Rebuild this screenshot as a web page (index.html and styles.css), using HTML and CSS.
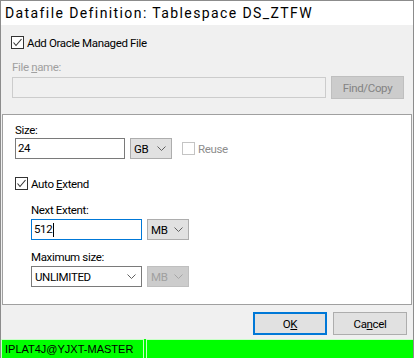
FILE: index.html
```html
<!DOCTYPE html>
<html lang="en">
<head>
  <meta charset="UTF-8">
  <meta name="viewport" content="width=device-width, initial-scale=1.0">
  <title>Datafile Definition</title>
  <link rel="stylesheet" href="styles.css">
</head>
<body>
  <div class="window">
    <div class="titlebar">Datafile Definition: Tablespace DS_ZTFW</div>

    <div class="top">
      <label class="check">
        <span class="box"><svg width="11" height="11" viewBox="0 0 11 11"><polyline points="1.5,5.5 4,8.5 9.5,2" fill="none" stroke="#333" stroke-width="1.1"/></svg></span>
        <span>Add Oracle Managed File</span>
      </label>
      <div class="label disabled">File <u>n</u>ame:</div>
      <div class="file-row">
        <div class="field field-disabled file-field"></div>
        <div class="btn btn-disabled">Find/Copy</div>
      </div>
    </div>

    <div class="panel">
      <div class="label">Size:</div>
      <div class="row">
        <div class="field size-field">24</div>
        <div class="combo unit">GB <svg class="chev" width="9" height="5" viewBox="0 0 9 5"><polyline points="0.5,0.5 4.5,4.5 8.5,0.5" fill="none" stroke="#606060"/></svg></div>
        <label class="check check-disabled reuse">
          <span class="box"></span>
          <span>Reuse</span>
        </label>
      </div>

      <label class="check auto">
        <span class="box"><svg width="11" height="11" viewBox="0 0 11 11"><polyline points="1.5,5.5 4,8.5 9.5,2" fill="none" stroke="#333" stroke-width="1.1"/></svg></span>
        <span>Auto <u>E</u>xtend</span>
      </label>

      <div class="extend">
        <div class="label next-label">Next Extent:</div>
        <div class="row">
          <div class="field field-focus ext-field">512<span class="caret"></span></div>
          <div class="combo unit">MB <svg class="chev" width="9" height="5" viewBox="0 0 9 5"><polyline points="0.5,0.5 4.5,4.5 8.5,0.5" fill="none" stroke="#606060"/></svg></div>
        </div>
        <div class="label max-label">Maximum size:</div>
        <div class="row">
          <div class="combo combo-white ext-field">UNLIMITED <svg class="chev" width="9" height="5" viewBox="0 0 9 5"><polyline points="0.5,0.5 4.5,4.5 8.5,0.5" fill="none" stroke="#606060"/></svg></div>
          <div class="combo combo-disabled unit">MB <svg class="chev" width="9" height="5" viewBox="0 0 9 5"><polyline points="0.5,0.5 4.5,4.5 8.5,0.5" fill="none" stroke="#a6a6a6"/></svg></div>
        </div>
      </div>
    </div>

    <div class="buttons">
      <div class="btn btn-default">O<u>K</u></div>
      <div class="btn">Ca<u>n</u>cel</div>
    </div>

    <div class="statusbar">
      <div class="cell cell-user">IPLAT4J@YJXT-MASTER</div>
      <div class="cell cell-rest"></div>
    </div>
  </div>
</body>
</html>
```

FILE: styles.css
```css
body {
  margin: 0;
  padding: 0;
  background-color: #f0f0f0;
}
.window {
  width: 414px;
  height: 358px;
  box-sizing: border-box;
  border: 1px solid #8c8c8c;
  border-bottom: none;
  background-color: #f0f0f0;
  font-family: Roboto, "Liberation Sans", sans-serif;
  font-size: 11.5px;
  letter-spacing: -0.35px;
  color: #000;
  overflow: hidden;
}
.titlebar {
  height: 24px;
  line-height: 24px;
  padding-left: 4px;
  background-color: #fff;
  font-size: 14px;
  letter-spacing: 1.4px;
}
u {
  text-decoration: underline;
  text-underline-offset: 1px;
}
.top {
  padding: 11px 0 0 10px;
}
.check {
  display: flex;
  align-items: center;
  gap: 3px;
  height: 13px;
}
.box {
  width: 13px;
  height: 13px;
  box-sizing: border-box;
  border: 1px solid #333;
  background-color: #fff;
  display: flex;
}
.check-disabled {
  color: #8d8d8d;
}
.check-disabled .box {
  border-color: #c4c4c4;
}
.label {
  height: 15px;
  line-height: 15px;
}
.disabled {
  color: #a0a0a0;
}
.top .label {
  margin-top: 11px;
  padding-left: 1px;
}
.file-row {
  display: flex;
  align-items: center;
  gap: 5px;
  margin-top: 1px;
  padding-left: 1px;
}
.field {
  height: 21px;
  box-sizing: border-box;
  border: 1px solid #7a7a7a;
  background-color: #fff;
  line-height: 19px;
  padding-left: 2px;
  display: flex;
  align-items: center;
}
.field-disabled {
  border-color: #cccccc;
  background-color: #f0f0f0;
}
.field-focus {
  border-color: #0078d7;
}
.file-field {
  width: 314px;
}
.caret {
  display: inline-block;
  width: 1px;
  height: 14px;
  background-color: #000;
  margin-left: 1px;
}
.btn {
  width: 74px;
  height: 23px;
  box-sizing: border-box;
  border: 1px solid #adadad;
  background-color: #e1e1e1;
  display: flex;
  align-items: center;
  justify-content: center;
}
.btn-disabled {
  width: 73px;
  background-color: #cccccc;
  border-color: #bfbfbf;
  color: #838383;
}
.btn-default {
  border: 2px solid #0078d7;
}
.panel {
  margin: 15px 1px 0;
  height: 191px;
  box-sizing: border-box;
  border: 1px solid #a0a0a0;
  background-color: #fff;
  padding: 8px 0 0 12px;
}
.row {
  display: flex;
  align-items: center;
  gap: 5px;
}
.size-field {
  width: 110px;
}
.combo {
  height: 21px;
  box-sizing: border-box;
  border: 1px solid #adadad;
  background-color: #e1e1e1;
  display: flex;
  align-items: center;
  justify-content: space-between;
  padding: 0 5px 0 3px;
}
.combo-white {
  background-color: #fff;
  border-color: #7a7a7a;
}
.combo-disabled {
  background-color: #cccccc;
  border-color: #bfbfbf;
  color: #a0a0a0;
}
.unit {
  width: 42px;
}
.reuse {
  margin-left: 5px;
}
.auto {
  margin-top: 18px;
}
.extend {
  padding-left: 16px;
}
.next-label {
  margin-top: 13px;
  margin-bottom: 1px;
}
.max-label {
  margin-top: 10px;
  margin-bottom: 1px;
}
.ext-field {
  width: 111px;
}
.buttons {
  display: flex;
  justify-content: flex-end;
  gap: 6px;
  margin-top: 7px;
  padding-right: 6px;
}
.statusbar {
  margin-top: 4px;
  height: 19px;
  display: flex;
  gap: 2px;
  background-color: #00ff00;
}
.cell {
  box-sizing: border-box;
  height: 19px;
  border: 1px solid #c8ffc8;
  border-bottom: none;
  background-color: #00ff00;
}
.cell-user {
  width: 143px;
  padding-left: 3px;
  line-height: 18px;
  font-family: "Liberation Sans", sans-serif;
  font-size: 11px;
  letter-spacing: 0;
}
.cell-rest {
  flex: 1;
  border-right: none;
}
```
